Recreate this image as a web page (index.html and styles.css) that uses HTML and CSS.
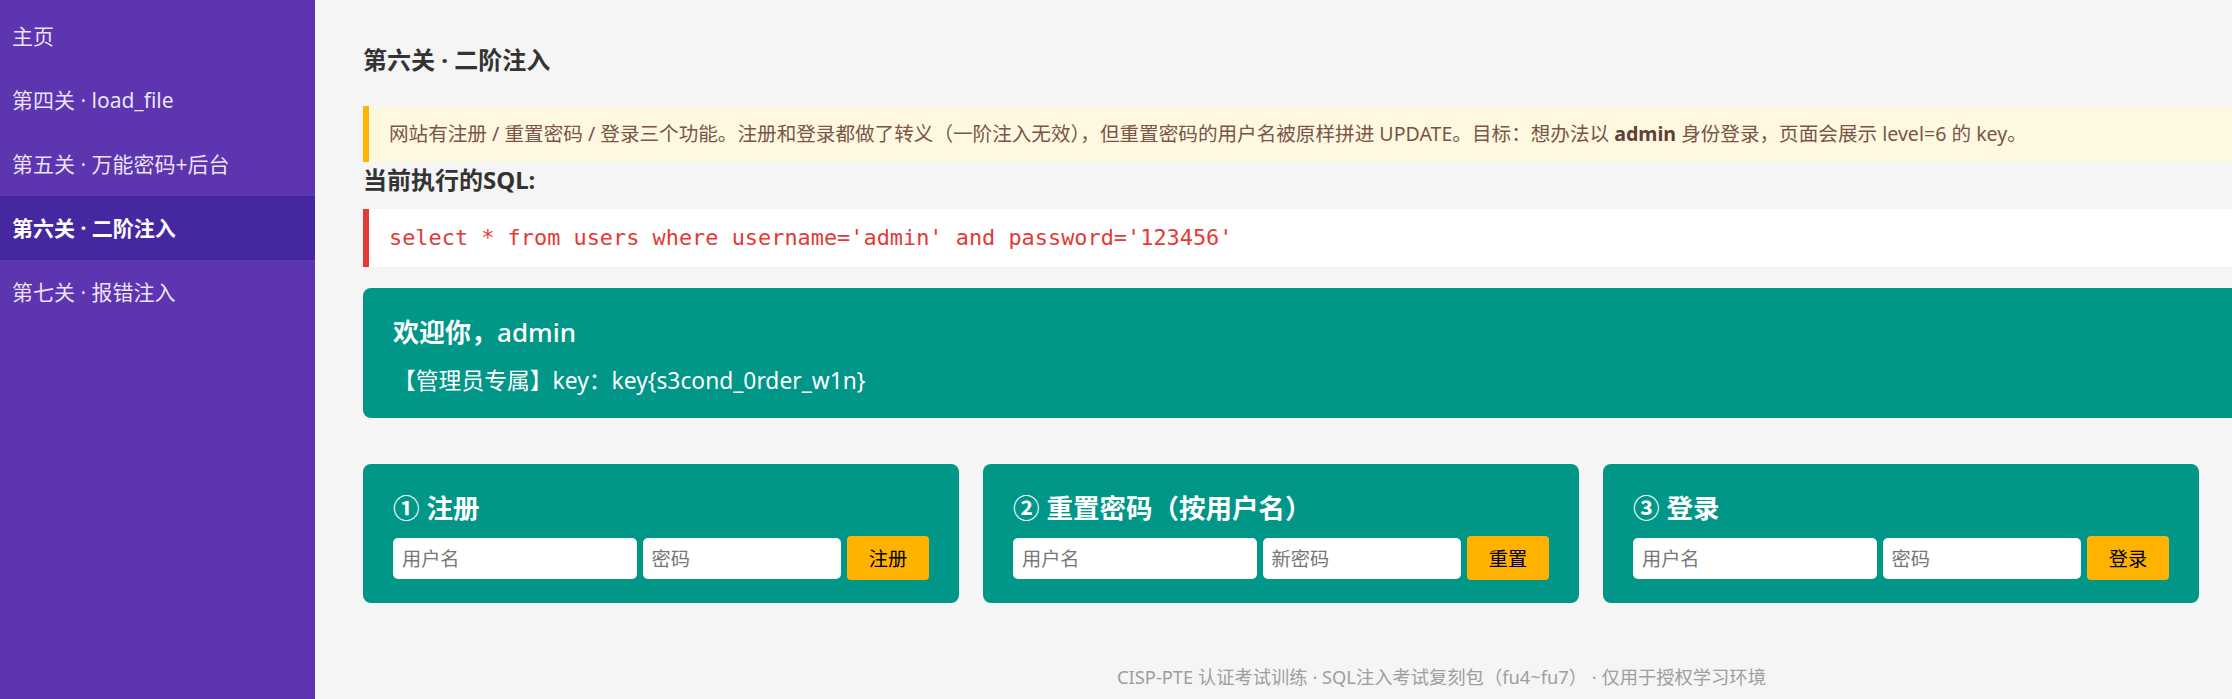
FILE: index.html
```html
<!DOCTYPE html>
<html lang="zh-CN">
<head>
  <meta charset="UTF-8" />
  <title>第六关 · 二阶注入</title>
  <meta name="viewport" content="width=device-width, initial-scale=1" />
  <link rel="stylesheet" href="styles.css">
</head>
<body>
  <aside class="sidebar">
    <a href="#" class="nav-item">主页</a>
    <a href="#" class="nav-item">第四关 · load_file</a>
    <a href="#" class="nav-item">第五关 · 万能密码+后台</a>
    <a href="#" class="nav-item active">第六关 · 二阶注入</a>
    <a href="#" class="nav-item">第七关 · 报错注入</a>
  </aside>

  <main class="main">
    <h1 class="page-title">第六关 · 二阶注入</h1>

    <div class="notice">网站有注册 / 重置密码 / 登录三个功能。注册和登录都做了转义（一阶注入无效），但重置密码的用户名被原样拼进 UPDATE。目标：想办法以 <b>admin</b> 身份登录，页面会展示 level=6 的 key。</div>

    <h3 class="sql-label">当前执行的SQL:</h3>
    <pre class="sql">select * from users where username='admin' and password='123456'</pre>

    <div class="welcome">
      <h2>欢迎你，<span class="uname">admin</span></h2>
      <p>【管理员专属】key：key{s3cond_0rder_w1n}</p>
    </div>

    <div class="cards">
      <form class="card">
        <h3>① 注册</h3>
        <div class="row">
          <input type="text" name="username" placeholder="用户名">
          <input type="password" name="password" placeholder="密码">
          <button type="button">注册</button>
        </div>
      </form>
      <form class="card">
        <h3>② 重置密码（按用户名）</h3>
        <div class="row">
          <input type="text" name="username" placeholder="用户名">
          <input type="password" name="newpass" placeholder="新密码">
          <button type="button">重置</button>
        </div>
      </form>
      <form class="card">
        <h3>③ 登录</h3>
        <div class="row">
          <input type="text" name="username" placeholder="用户名">
          <input type="password" name="password" placeholder="密码">
          <button type="button">登录</button>
        </div>
      </form>
    </div>

    <footer class="footer">CISP-PTE 认证考试训练 · SQL注入考试复刻包（fu4~fu7） · 仅用于授权学习环境</footer>
  </main>
</body>
</html>
```

FILE: styles.css
```css
html, body {
  height: 100%;
}
body {
  margin: 0;
  display: flex;
  overflow: hidden;
  font-family: "Noto Sans", "Noto Sans CJK SC", sans-serif;
  background: #f5f5f5;
  color: #333;
}

/* left menu */
.sidebar {
  width: 315px;
  flex-shrink: 0;
  padding-top: 4px;
  background: #5e35b1;
  display: flex;
  flex-direction: column;
}
.nav-item {
  display: block;
  padding: 17px 12px;
  line-height: 30px;
  font-size: 21px;
  color: rgba(255, 255, 255, 0.88);
  text-decoration: none;
}
.nav-item.active {
  background: #4527a0;
  color: #fff;
  font-weight: bold;
}

.main {
  flex: 1;
  min-width: 0;
  padding-left: 48px;
  overflow: hidden;
}
.page-title {
  margin: 42px 0 28px;
  font-size: 24px;
  line-height: 36px;
  color: #333;
}

.notice {
  margin-right: -16px;
  padding: 14px 20px;
  background: #fff8e1;
  border-left: 6px solid #ffb300;
  color: #795548;
  font-size: 19.6px;
  line-height: 28px;
}
.notice b {
  color: #5d4037;
}

.sql-label {
  margin: 0 0 11px;
  font-size: 24px;
  line-height: 36px;
  color: #333;
}
.sql {
  margin: 0 -16px 0 0;
  padding: 13px 20px;
  background: #fff;
  border-left: 6px solid #e53935;
  color: #e53935;
  font-family: "DejaVu Sans Mono", "Liberation Mono", monospace;
  font-size: 21.9px;
  line-height: 32px;
}

.welcome {
  margin: 21px -16px 0 0;
  padding: 26px 30px 20px;
  background: #009688;
  border-radius: 8px;
  color: #fff;
}
.welcome h2 {
  margin: 0 0 14px;
  font-size: 26px;
  line-height: 36px;
}
.welcome .uname {
  font-weight: 500;
}
.welcome p {
  margin: 0;
  font-size: 22.8px;
  line-height: 34px;
}

/* three action cards */
.cards {
  display: grid;
  grid-template-columns: repeat(3, 1fr);
  gap: 24px;
  margin: 46px 33px 0 0;
}
.card {
  margin: 0;
  padding: 26px 30px 23px;
  background: #009688;
  border-radius: 8px;
  color: #fff;
}
.card h3 {
  margin: 0 0 10px;
  font-size: 26.5px;
  line-height: 36px;
}
.row {
  display: grid;
  grid-template-columns: 243fr 198fr 82px;
  gap: 6px;
  align-items: center;
}
.row input {
  min-width: 0;
  height: 41px;
  box-sizing: border-box;
  padding: 0 9px;
  border: none;
  border-radius: 5px;
  background: #fff;
  font-family: inherit;
  font-size: 19.2px;
  color: #333;
}
.row input::placeholder {
  color: #777;
}
.row button {
  height: 44px;
  border: none;
  border-radius: 4px;
  background: #ffb300;
  color: #000;
  font-family: inherit;
  font-size: 19.2px;
  cursor: pointer;
}

.footer {
  margin-top: 60px;
  padding-left: 288px;
  text-align: center;
  font-size: 18.3px;
  line-height: 27px;
  color: #9e9e9e;
}
```
